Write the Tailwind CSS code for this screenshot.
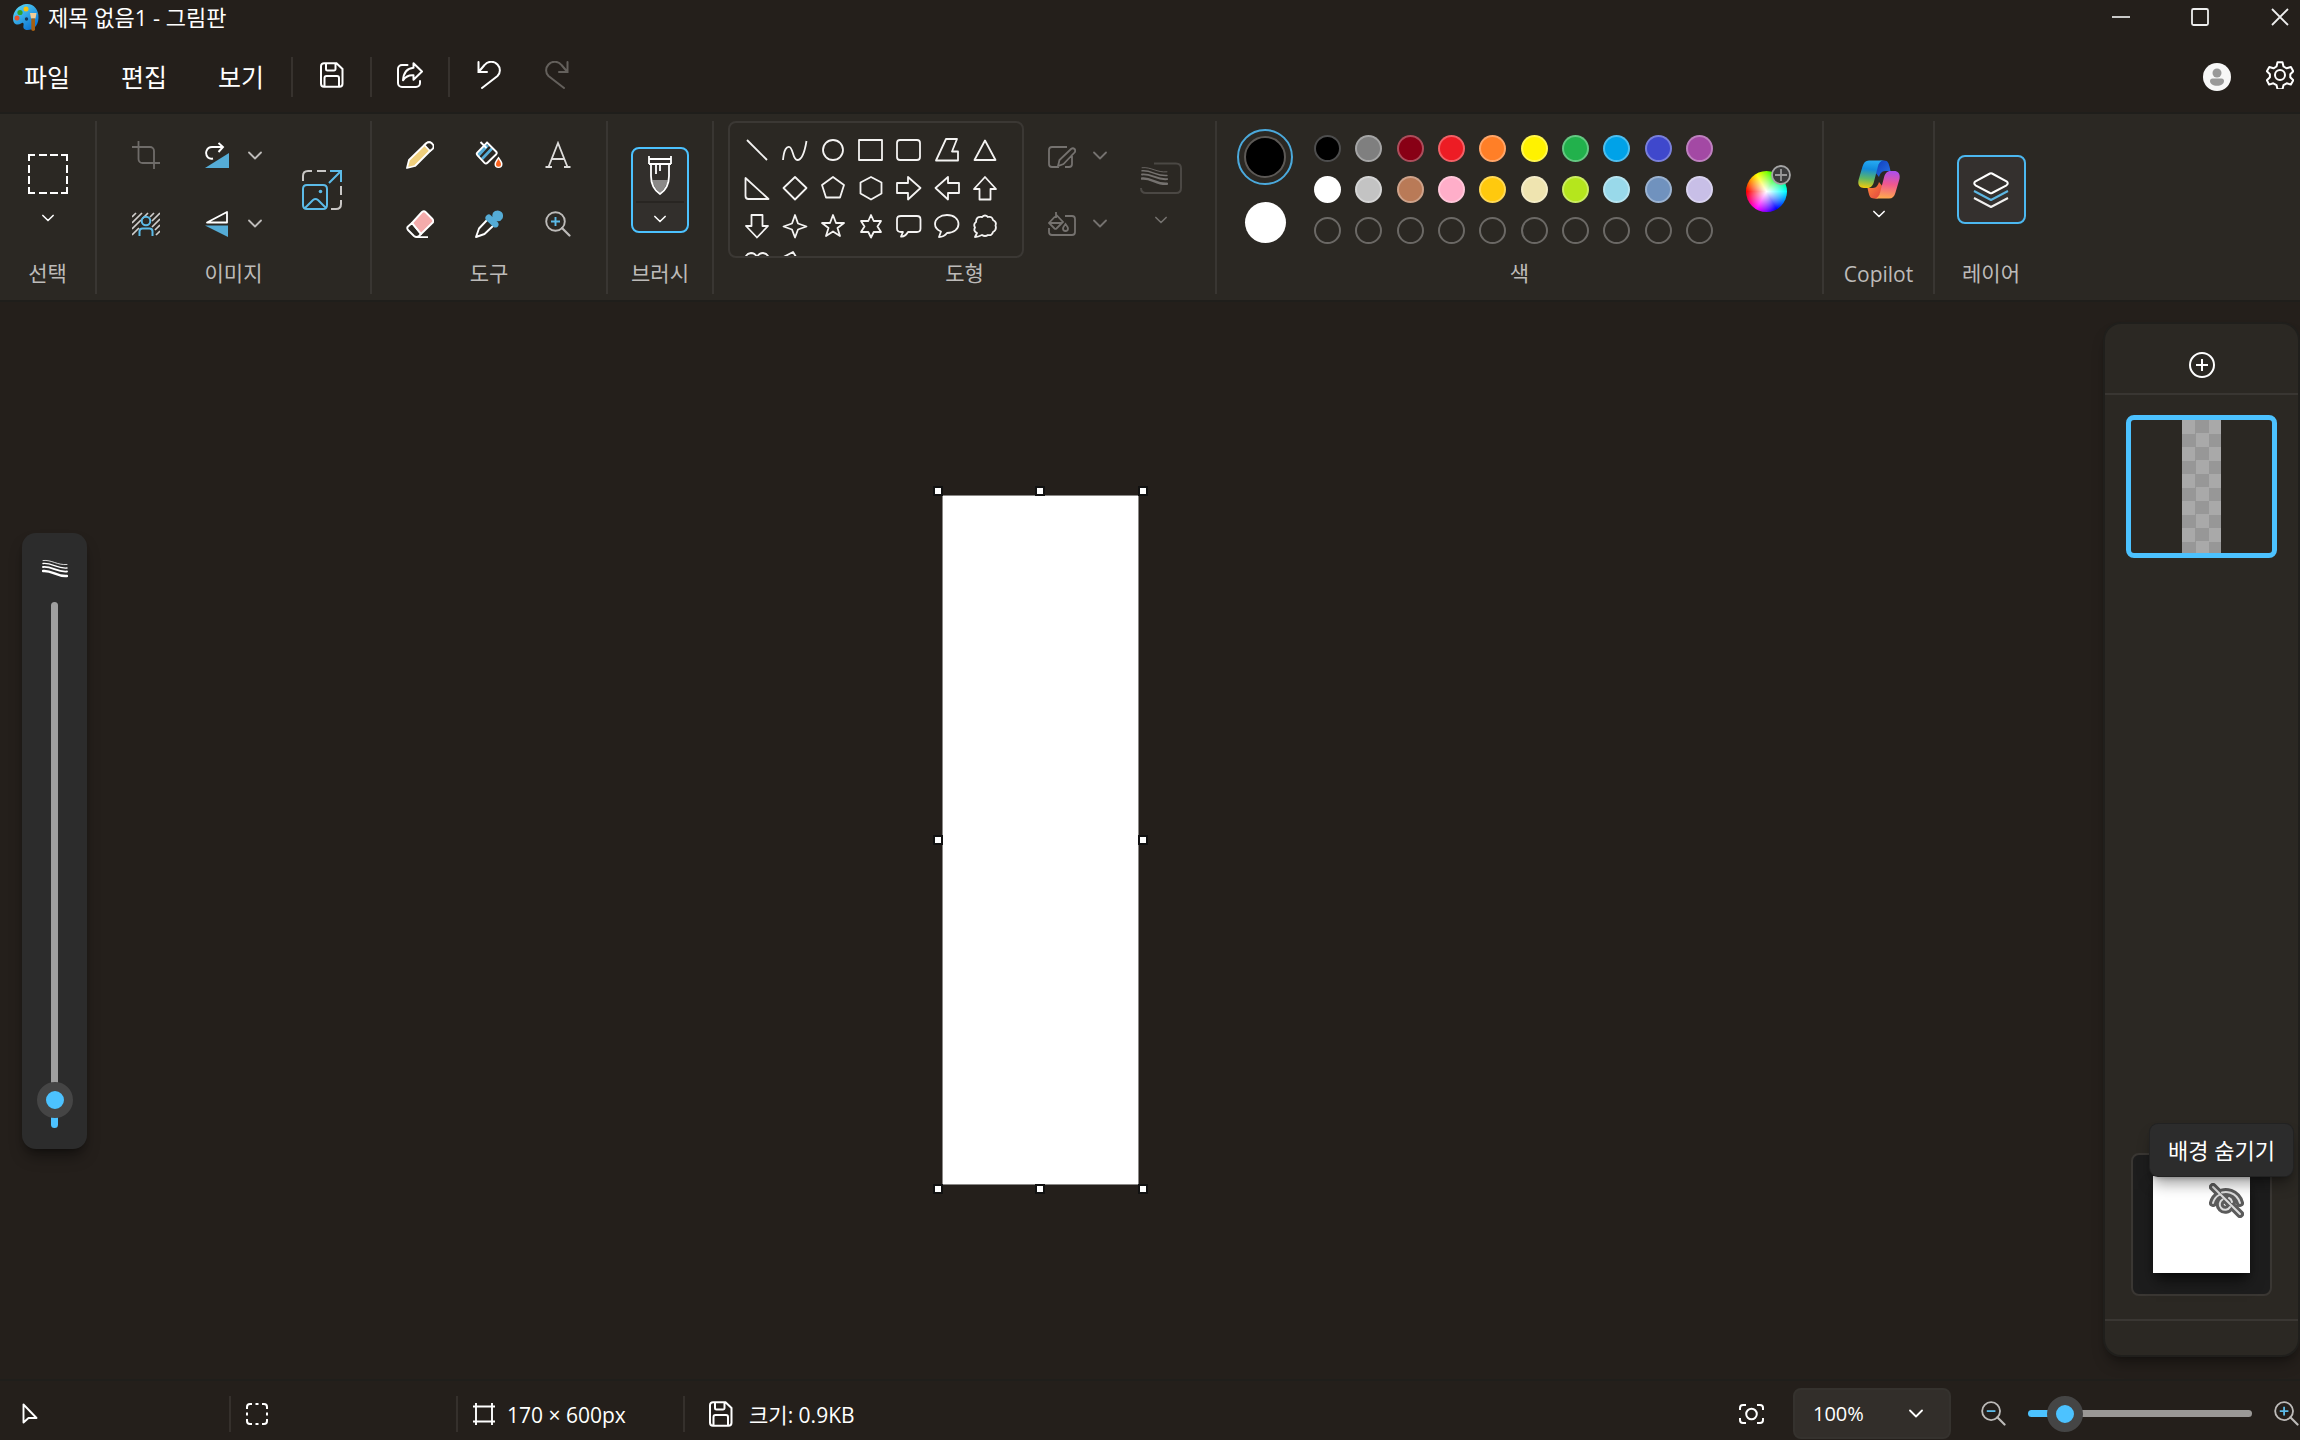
<!DOCTYPE html>
<html lang="ko">

<head>
  <meta charset="UTF-8" />
  <meta name="viewport" content="width=device-width, initial-scale=1.0" />
  <title>제목 없음1 - 그림판</title>
  <script src="https://cdn.jsdelivr.net/npm/@tailwindcss/browser@4"></script>
</head>

<body class="flex h-screen flex-col overflow-hidden bg-[#241f1b] font-['Open_Sans','Noto_Sans_CJK_KR',sans-serif] text-[21px] leading-7 text-white">

  <svg class="hidden">
    <symbol id="chevron" viewBox="0 0 14 9">
      <path d="M1 1.5l6 6 6-6" fill="none" stroke="currentColor" stroke-width="1.8" stroke-linecap="round" stroke-linejoin="round" />
    </symbol>
    <symbol id="save" viewBox="0 0 24 26">
      <path d="M4 1.2h12.5l6 5.8v14.8a3 3 0 0 1-3 3H4a3 3 0 0 1-3-3V4.2a3 3 0 0 1 3-3zM6 1.2V7a1.5 1.5 0 0 0 1.5 1.5H14A1.5 1.5 0 0 0 15.500 7V1.2M4.500 24.500V16a2 2 0 0 1 2-2H17a2 2 0 0 1 2 2v8.500" fill="none" stroke="currentColor" stroke-width="2" />
    </symbol>
    <symbol id="lens" viewBox="0 0 26 26">
      <path d="M17 17l7.500 7.500" stroke="currentColor" stroke-width="2.2" stroke-linecap="round" />
      <circle cx="10.500" cy="10.500" r="9.300" fill="none" stroke="currentColor" stroke-width="1.9" />
    </symbol>
    <symbol id="undo" viewBox="0 0 24 28">
      <path d="M1.500 1v10H10M2 10.500L7.500 4a8.600 8.600 0 0 1 13-.5c3.300 3.500 3 8.500 0 11.500L5 27" fill="none" stroke="currentColor" stroke-width="2" stroke-linecap="round" />
    </symbol>
    <symbol id="waves" viewBox="0 0 26 19">
      <g fill="none" stroke="currentColor" stroke-linecap="round">
        <path d="M1 1.500c9-1 14 5 24 4" stroke-width=".8" />
        <path d="M1 4.500c9-1 14 5.500 24 4.500" stroke-width="1.4" />
        <path d="M1 8c9-1 14 5.500 24 4.500" stroke-width="1.9" />
        <path d="M1 12c9-1 14 6 24 5" stroke-width="2.4" />
      </g>
    </symbol>
  </svg>

  <!-- title bar -->
  <header class="flex h-[34px] shrink-0 items-center pl-3">
    <svg class="h-7 w-7" viewBox="0 0 28 28">
      <defs>
        <linearGradient id="palette" x1="0" y1="0" x2="0.7" y2="1">
          <stop offset="0" stop-color="#5fe0fb" />
          <stop offset="1" stop-color="#0a72d2" />
        </linearGradient>
      </defs>
      <path d="M14 1C21 0 27 6 26.500 15c-.4 8-5 12-11 12-4 0-4.500-2.500-4-4.500.5-2.500-.5-3.500-2.500-2C6 22.500 1 22 1 15.500 1 8 6.500 2 14 1z" fill="url(#palette)" />
      <circle cx="14" cy="6" r="2.500" fill="#f9c10d" />
      <circle cx="8" cy="9.500" r="2.600" fill="#2fa32c" />
      <circle cx="5" cy="15" r="2.500" fill="#e7522b" />
      <circle cx="14.500" cy="16" r="1.700" fill="#12395c" />
      <path d="M18 10h6.500l-1 5.500H19z" fill="#f3cd97" />
      <path d="M19.300 15.500H23v11.500q-1.800 2-3.700 0z" fill="#a55f12" />
    </svg>
    <h1 class="ml-2 text-[22px]">제목 없음1 - 그림판</h1>
    <div class="ml-auto flex h-full items-center">
      <button class="flex h-full w-[79px] items-center justify-center" aria-label="최소화">
        <svg class="h-5 w-5" viewBox="0 0 20 20"><path d="M1 10h18" stroke="#ddd" stroke-width="1.8" /></svg>
      </button>
      <button class="flex h-full w-[79px] items-center justify-center" aria-label="최대화">
        <svg class="h-5 w-5" viewBox="0 0 20 20"><rect x="2" y="2" width="16" height="16" rx="1.5" fill="none" stroke="#eee" stroke-width="1.8" /></svg>
      </button>
      <button class="flex h-full w-[61px] items-center justify-center pl-5" aria-label="닫기">
        <svg class="h-5 w-5" viewBox="0 0 20 20"><path d="M2 2l16 16M18 2L2 18" stroke="#eee" stroke-width="1.8" /></svg>
      </button>
    </div>
  </header>

  <!-- menu bar -->
  <nav class="flex h-[78px] shrink-0 items-center pt-2 pr-[6px]">
    <button class="w-[97px] pr-[3px] text-[25px]">파일</button>
    <button class="w-[97px] pr-[3px] text-[25px]">편집</button>
    <button class="w-[97px] pr-[3px] text-[25px]">보기</button>
    <span class="h-10 w-[2px] bg-[#37322e]"></span>
    <button class="flex w-[77px] justify-center pb-1" aria-label="저장"><svg class="h-[26px] w-6"><use href="#save" /></svg></button>
    <span class="h-10 w-[2px] bg-[#37322e]"></span>
    <button class="flex w-[76px] justify-center pb-1" aria-label="공유">
      <svg class="h-[26px] w-[26px]" viewBox="0 0 26 26" fill="none" stroke="currentColor" stroke-width="2" stroke-linejoin="round" stroke-linecap="round">
        <path d="M10.500 3H5a4 4 0 0 0-4 4v14a4 4 0 0 0 4 4h14a4 4 0 0 0 4-4v-2" />
        <path d="M16.500 1.200l8.500 8.300-8.500 8.300v-4.500c-5-.5-8 1.500-10.500 5 .5-7 4-12 10.500-12.600z" />
      </svg>
    </button>
    <span class="h-10 w-[2px] bg-[#37322e]"></span>
    <button class="flex w-[78px] justify-center pb-1" aria-label="실행 취소"><svg class="h-7 w-6"><use href="#undo" /></svg></button>
    <button class="flex w-[58px] justify-center pb-1 text-[#64605c]" aria-label="다시 실행"><svg class="h-7 w-6 -scale-x-100"><use href="#undo" /></svg></button>
    <div class="ml-auto flex items-center gap-[35px]">
      <button aria-label="계정">
        <svg class="h-7 w-7" viewBox="0 0 28 28"><circle cx="14" cy="14" r="14" fill="#f7f7f7" /><circle cx="14" cy="10" r="4.500" fill="#999" /><path d="M7 18q0-2.500 2.500-2.500h9q2.500 0 2.500 2.500c0 3-3 4.800-7 4.800S7 21 7 18z" fill="#999" /></svg>
      </button>
      <button class="pb-1" aria-label="설정">
        <svg class="h-7 w-7" viewBox="0 0 28 28" fill="none" stroke="currentColor" stroke-width="2" stroke-linejoin="round">
          <circle cx="14" cy="14" r="5" />
          <path d="M11.500 1.200h5l1 4.300 3.200 1.800 4.200-1.300 2.400 4.300-3 3v3l3 3-2.400 4.300-4.200-1.300-3.200 1.800-1 4.200h-5l-1-4.200-3.200-1.800-4.200 1.300L.9 19.300l3-3v-3l-3-3L3.300 6l4.200 1.300 3-1.800z" />
        </svg>
      </button>
    </div>
  </nav>

  <!-- ribbon -->
  <div class="flex h-[190px] shrink-0 border-y-2 border-[#1f1e1b] bg-[#2b2823] pt-[7px] pb-[6px] text-[#bdbbb9]">
    <section class="flex w-[97px] shrink-0 flex-col border-r-2 border-[#393632]">
      <button class="flex h-[137px] w-full flex-col items-center gap-5 pt-[33px]" aria-label="선택 도구">
        <svg class="h-10 w-10" viewBox="0 0 40 40"><path d="M1 7V1h6M33 1h6v6M39 33v6h-6M7 39H1v-6M11 1h8M22 1h8M11 39h8M22 39h8M1 11v8M1 22v8M39 11v8M39 22v8" fill="none" stroke="#fff" stroke-width="2" /></svg>
        <svg class="h-2 w-3 text-white"><use href="#chevron" /></svg>
      </button>
      <h2 class="pt-[1px] text-center">선택</h2>
    </section>

    <section class="flex w-[275px] shrink-0 flex-col border-r-2 border-[#393632]">
      <div class="flex h-[137px] items-center pl-[7px]">
        <div class="grid h-full grid-cols-[84px_58px_18px] grid-rows-2 place-items-center">
          <button aria-label="자르기"><svg class="h-7 w-7 text-[#6f6c69]" viewBox="0 0 28 28" fill="none" stroke="currentColor" stroke-width="1.8"><path d="M6.500 0v18a4 4 0 0 0 4 4H28M0 6h18a4 4 0 0 1 4 4v18" /></svg></button>
          <button aria-label="회전"><svg class="h-[26px] w-6" viewBox="0 0 24 26"><path d="M24 11v15H0z" fill="#55acd6" /><path d="M3 15.500C-1 11 2 5 7 5h11M13.500 1L18 5l-4.500 5M3 15.500c1.500 1.300 3 1.500 5 1" fill="none" stroke="#fff" stroke-width="1.9" /></svg></button>
          <svg class="h-[9px] w-[14px]"><use href="#chevron" /></svg>
          <button aria-label="배경 제거">
            <svg class="h-6 w-7" viewBox="0 0 28 24" fill="none">
              <path d="M0 5l4-4M0 11L10 1M0 17l9-9M0 23l7-7M10 7l6-6M18 5l4-4M20 9l8-8M20 15l8-8M23 18l5-5M24 23l4-4" stroke="#d0cecc" stroke-width="1.7" />
              <circle cx="14" cy="9" r="4.300" stroke="#5cbbe8" stroke-width="2" />
              <path d="M7.500 24v-4.500q0-3 3-3h7q3 0 3 3V24" stroke="#5cbbe8" stroke-width="2" />
            </svg>
          </button>
          <button aria-label="대칭 이동"><svg class="h-[26px] w-6" viewBox="0 0 24 26"><path d="M22 1v10.500H2z" fill="none" stroke="#fff" stroke-width="1.8" stroke-linejoin="round" /><path d="M0 14.500h23V26z" fill="#55acd6" /></svg></button>
          <svg class="h-[9px] w-[14px]"><use href="#chevron" /></svg>
        </div>
        <button class="ml-[38px]" aria-label="크기 조정">
          <svg class="h-10 w-10" viewBox="0 0 40 40" fill="none" stroke-width="2">
            <path d="M1 11V6q0-5 5-5h4M15 1h9M39 16v9M39 30v4q0 5-5 5h-5" stroke="#c9c7c5" />
            <path d="M28 1h11v11M39 1L27 13M5 15h16q4 0 4 4v16q0 4-4 4H5q-4 0-4-4V19q0-4 4-4zM3 38l8-8q2.500-2 5 0l8 8" stroke="#5cbbe8" />
            <circle cx="18.500" cy="21.500" r="1.800" fill="#5cbbe8" />
          </svg>
        </button>
      </div>
      <h2 class="pt-[1px] text-center">이미지</h2>
    </section>

    <section class="flex w-[236px] shrink-0 flex-col border-r-2 border-[#393632]">
      <div class="grid h-[137px] grid-cols-[69px_69px_69px] grid-rows-2 place-content-center place-items-center">
        <button aria-label="연필">
          <svg class="h-7 w-7" viewBox="0 0 28 28" stroke="#fff" stroke-width="1.8" stroke-linejoin="round"><path d="M1 27l2-8L20 2.500Q23 0 26 2.500q2 3-.5 6L9 25z" fill="#efcf7c" /><path d="M18.500 4L21 1.800q3-1.500 5.300 1t.5 5L24 10z" fill="#2b2823" /></svg>
        </button>
        <button aria-label="채우기">
          <svg class="h-7 w-7" viewBox="0 0 28 28"><path d="M2 12l9-9 3 2L4 16zM6 17L16 6.500l2 2L8 19z" fill="#55acd6" /><path d="M5.500 1l6 6M12 1.500l9 9q1.500 1.500 0 3l-8.500 8.300q-1.500 1.500-3 0l-7-7.500q-1.500-1.500 0-3z" fill="none" stroke="#fff" stroke-width="1.9" /><path d="M23.500 15.500c3 4 4 6 4 7.500a4 4 0 0 1-8 0c0-1.500 1-3.500 4-7.500z" fill="#fff" /><path d="M23.500 18c1.700 2.700 2.500 3.800 2.500 5.200a2.500 2.500 0 0 1-5 0c0-1.400.8-2.500 2.500-5.200z" fill="#fb641f" /></svg>
        </button>
        <button aria-label="텍스트">
          <svg class="h-7 w-7" viewBox="0 0 28 28" fill="none" stroke="#dedddb" stroke-width="1.8"><path d="M4.500 26L14 2l9.500 24M7.500 18h13M1.500 26H8M20 26h6.500" /></svg>
        </button>
        <button aria-label="지우개">
          <svg class="h-7 w-7" viewBox="0 0 28 28" stroke="#fff" stroke-width="1.9" stroke-linejoin="round"><path d="M6 13L16 2q2-1.500 3.500 0l7 7q1.500 2 0 3.800L15 24z" fill="#f4abab" /><path d="M6 13l9 11-2 2q-2.500 2-5 0L2 20q-1.500-2 0-3.500zM10 27.200h12" fill="none" /></svg>
        </button>
        <button aria-label="색 선택">
          <svg class="h-7 w-7" viewBox="0 0 28 28"><path d="M13 9L4 18.500 1 27l8.500-3L19 15" fill="none" stroke="#fff" stroke-width="1.9" stroke-linejoin="round" /><path d="M11 6q2.500-3 5-.5L17.500 7q-1-4 2.500-6 4-1.500 6.500 1t1 6.500q-2 3.500-6 2.500l1.500 1.500q1.500 2.500-.5 4.500-2.500 1-4 0L11 10q-1.500-2 0-4z" fill="#55acd6" /></svg>
        </button>
        <button aria-label="돋보기">
          <svg class="h-[26px] w-[26px]" viewBox="0 0 26 26"><use href="#lens" /><path d="M10.500 6v9M6 10.500h9" stroke="#5cbbe8" stroke-width="1.9" /></svg>
        </button>
      </div>
      <h2 class="pt-[1px] text-center">도구</h2>
    </section>

    <section class="flex w-[106px] shrink-0 flex-col items-center border-r-2 border-[#393632]">
      <div class="h-[137px] pt-[26px]">
        <button class="flex h-[86px] w-[58px] flex-col items-center rounded-lg border-2 border-[#4cc2ff] bg-[#322f2c] pt-[7px]" aria-label="브러시 종류">
          <svg class="h-10 w-6" viewBox="0 0 24 40"><path d="M4 24h16q-2 8-8 13-6-5-8-13z" fill="#8b8988" /><path d="M1 0v8M23 0v8M1 3h22M1 8h22M3 8v12q0 12 9 18 9-6 9-18V8M8 9v9M12 9v6" fill="none" stroke="#fff" stroke-width="1.8" /></svg>
          <span class="mt-[5px] h-[2px] w-12 bg-[#282522]"></span>
          <svg class="mt-3 h-2 w-3 text-white"><use href="#chevron" /></svg>
        </button>
      </div>
      <h2 class="pt-[1px] text-center">브러시</h2>
    </section>

    <section class="flex w-[503px] shrink-0 flex-col border-r-2 border-[#393632]">
      <div class="flex h-[137px] pl-[14px]">
        <div id="shapes" class="grid w-[296px] auto-rows-[38px] grid-cols-[repeat(7,38px)] place-items-center overflow-hidden rounded-lg border-2 border-[#3b3834] pt-2 pl-2"></div>
        <div class="ml-[10px] grid grid-cols-[56px_20px] grid-rows-2 place-items-center text-[#75726f]">
          <button aria-label="윤곽선"><svg class="h-7 w-7" viewBox="0 0 28 28" fill="none" stroke="currentColor" stroke-width="1.8"><path d="M19 6H4Q1 6 1 9v14q0 3 3 3h7M24 15v8q0 3-3 3h-4M10 25l1.500-6L23 8q2-1.500 3.500 0t0 3.500L15.500 23z" /></svg></button>
          <svg class="h-[9px] w-[14px]"><use href="#chevron" /></svg>
          <button aria-label="도형 채우기"><svg class="h-6 w-7" viewBox="0 0 28 24" fill="none" stroke="currentColor" stroke-width="1.8"><path d="M17 4h7q3 0 3 3v13q0 3-3 3H4q-3 0-3-3v-4M8 0v6M8 2.500l7 7.500-6.500 6.500q-1 .7-2 0L1 11l6-6.500M1.500 11h13M17.500 12c1.700 2.200 2.500 3.500 2.500 4.500a2.500 2.500 0 0 1-5 0c0-1 .8-2.300 2.500-4.500z" /></svg></button>
          <svg class="h-[9px] w-[14px]"><use href="#chevron" /></svg>
        </div>
        <button class="ml-[30px] flex w-[42px] flex-col items-center gap-[22px] pt-[41px] text-[#75726f]" aria-label="크기">
          <svg class="h-8 w-[42px]" viewBox="0 0 42 32"><path d="M14 1.500h22q5 0 5 5V26q0 5-5 5H6q-5 0-5-5" fill="none" stroke="#4b4844" stroke-width="2" /><use href="#waves" x="1" y="4" width="27" height="20" /></svg>
          <svg class="h-2 w-3"><use href="#chevron" /></svg>
        </button>
      </div>
      <h2 class="pt-[1px] text-center">도형</h2>
    </section>

    <section class="flex w-[607px] shrink-0 flex-col border-r-2 border-[#393632]">
      <div class="flex h-[137px] items-start pt-2 pl-5">
        <div class="flex flex-col items-center gap-[17px]">
          <button class="flex h-14 w-14 items-center justify-center rounded-full border-2 border-[#4ba9dc]" aria-label="색 1"><span class="h-[42px] w-[42px] rounded-full border-2 border-[#5c5956] bg-black"></span></button>
          <button class="h-[41px] w-[41px] rounded-full bg-white" aria-label="색 2"></button>
        </div>
        <div id="swatches" class="mt-[6px] ml-[21px] grid w-[399px] grid-cols-[repeat(10,27px)] justify-between gap-y-[14px]"></div>
        <button class="relative mt-[42px] ml-[33px] h-[41px] w-[41px] rounded-full bg-[radial-gradient(circle,white,transparent_68%),conic-gradient(from_270deg,red,yellow,lime,cyan,blue,magenta,red)]" aria-label="색 편집">
          <svg class="absolute -top-[6px] left-[25px] h-5 w-5" viewBox="0 0 20 20"><circle cx="10" cy="10" r="9" fill="#3b3b3b" stroke="#a5a5a5" stroke-width="1.8" /><path d="M10 4v12M4 10h12" stroke="#999" stroke-width="1.8" /></svg>
        </button>
      </div>
      <h2 class="pt-[1px] text-center">색</h2>
    </section>

    <section class="flex w-[111px] shrink-0 flex-col border-r-2 border-[#393632]">
      <button class="flex h-[137px] w-full flex-col items-center gap-[11px] pt-[39px]" aria-label="Copilot 메뉴">
        <svg class="h-[39px] w-[42px]" viewBox="0 0 42 39">
          <defs>
            <linearGradient id="cp-left" x1="0.3" y1="0" x2="0.2" y2="1"><stop offset="0" stop-color="#25a8f2" /><stop offset=".3" stop-color="#128bdc" /><stop offset=".65" stop-color="#5eb765" /><stop offset="1" stop-color="#f7cb0a" /></linearGradient>
            <linearGradient id="cp-right" x1="0.3" y1="0" x2="0.2" y2="1"><stop offset="0" stop-color="#ffa650" /><stop offset=".5" stop-color="#f0588e" /><stop offset="1" stop-color="#a94ef0" /></linearGradient>
            <linearGradient id="cp-blue" x1="0" y1="0" x2="1" y2="1"><stop offset="0" stop-color="#0f3dbd" /><stop offset="1" stop-color="#2872e4" /></linearGradient>
            <linearGradient id="cp-red" x1="0" y1="0" x2="1" y2="1"><stop offset="0" stop-color="#e0413f" /><stop offset="1" stop-color="#ff8a3c" /></linearGradient>
          </defs>
          <path d="M22 .5h4c4 0 4.700 3 5.500 6l1 4.500h-4c-4 0-6 1-7.500 6l-4-5z" fill="url(#cp-blue)" />
          <path d="M11 .5h15c-4 0-5.200 3-6.200 6.500L16 21.500c-1 4-3 6.500-6.500 6.500H6C.5 28-.5 23.500.8 19L4.500 6.500C5.700 2.500 7.500.5 11 .5z" fill="url(#cp-left)" />
          <g transform="rotate(180 21 19.500)">
            <path d="M22 .5h4c4 0 4.700 3 5.500 6l1 4.500h-4c-4 0-6 1-7.500 6l-4-5z" fill="url(#cp-red)" />
            <path d="M11 .5h15c-4 0-5.200 3-6.200 6.500L16 21.500c-1 4-3 6.500-6.500 6.500H6C.5 28-.5 23.500.8 19L4.500 6.500C5.700 2.500 7.500.5 11 .5z" fill="url(#cp-right)" />
          </g>
        </svg>
        <svg class="h-2 w-3 text-white"><use href="#chevron" /></svg>
      </button>
      <h2 class="pt-[2px] text-center">Copilot</h2>
    </section>

    <section class="flex w-[112px] shrink-0 flex-col items-center">
      <div class="flex h-[137px] items-center">
        <button class="flex h-[69px] w-[69px] items-center justify-center rounded-lg border-2 border-[#4cb8f0] bg-[#34302e]" aria-label="레이어 패널">
          <svg class="h-9 w-9" viewBox="0 0 36 36" fill="none" stroke-width="2" stroke-linejoin="round"><path d="M17 1.500q1-.5 2 0L33.500 9.300q2.500 2 0 4L19 21q-1 .5-2 0L2.500 13.300q-2.500-2 0-4z" stroke="#fff" /><path d="M1 19l17 9 17-9" stroke="#5cb6e2" /><path d="M1 26l17 9 17-9" stroke="#f0efee" /></svg>
        </button>
      </div>
      <h2 class="pt-[1px] text-center">레이어</h2>
    </section>
  </div>

  <!-- work area -->
  <main class="flex min-h-0 flex-1 items-center">
    <aside class="ml-[22px] flex h-[616px] w-[65px] flex-col items-center rounded-[14px] bg-[#2c2c2c] pt-[26px] shadow-lg shadow-black/40">
      <svg class="h-[19px] w-[26px]"><use href="#waves" /></svg>
      <input type="range" min="0" max="100" value="2" aria-label="브러시 크기"
        class="mt-6 h-[526px] w-[7px] appearance-none rounded-full bg-[linear-gradient(to_top,#4cc2ff_27px,#9f9f9f_27px)] [direction:rtl] [writing-mode:vertical-lr] [&::-webkit-slider-thumb]:h-9 [&::-webkit-slider-thumb]:w-9 [&::-webkit-slider-thumb]:appearance-none [&::-webkit-slider-thumb]:rounded-full [&::-webkit-slider-thumb]:border-[9px] [&::-webkit-slider-thumb]:border-[#454545] [&::-webkit-slider-thumb]:bg-[#4cc2ff]" />
    </aside>

    <div class="flex flex-1 justify-center pr-[111px] pb-[2px]">
      <div class="relative h-[690px] w-[197px] border border-[#8a8886] bg-white">
        <span class="absolute -top-[10px] -left-[10px] h-[10px] w-[10px] border-2 border-[#111] bg-white"></span>
        <span class="absolute -top-[10px] left-[92px] h-[10px] w-[10px] border-2 border-[#111] bg-white"></span>
        <span class="absolute -top-[10px] -right-[10px] h-[10px] w-[10px] border-2 border-[#111] bg-white"></span>
        <span class="absolute top-[339px] -left-[10px] h-[10px] w-[10px] border-2 border-[#111] bg-white"></span>
        <span class="absolute top-[339px] -right-[10px] h-[10px] w-[10px] border-2 border-[#111] bg-white"></span>
        <span class="absolute -bottom-[10px] -left-[10px] h-[10px] w-[10px] border-2 border-[#111] bg-white"></span>
        <span class="absolute -bottom-[10px] left-[92px] h-[10px] w-[10px] border-2 border-[#111] bg-white"></span>
        <span class="absolute -right-[10px] -bottom-[10px] h-[10px] w-[10px] border-2 border-[#111] bg-white"></span>
      </div>
    </div>

    <aside class="mr-[2px] flex w-[193px] flex-col items-center self-stretch pt-[22px] pb-6">
      <div class="flex w-full flex-1 flex-col items-center rounded-2xl bg-[#2b2823] shadow-lg ring-2 shadow-black/40 ring-[#201f1c]">
        <div class="flex h-[71px] w-full items-center justify-center border-b-2 border-[#393632] pt-3">
          <button aria-label="레이어 추가"><svg class="h-[26px] w-[26px]" viewBox="0 0 26 26" fill="none" stroke="#fff" stroke-width="2"><circle cx="13" cy="13" r="12" /><path d="M13 7v12M7 13h12" /></svg></button>
        </div>
        <button class="mt-5 flex h-[143px] w-[151px] justify-center rounded-lg border-[5px] border-[#4cc2ff]" aria-label="레이어 1">
          <span class="h-full w-[39px] bg-[conic-gradient(#979797_25%,#a9a9a9_0_50%,#979797_0_75%,#a9a9a9_0)] bg-size-[27px_27px]"></span>
        </button>
        <div class="relative mt-auto flex h-[143px] w-[141px] items-center justify-center rounded-lg border-2 border-[#3a3733] bg-[#1d1d1d]">
          <span class="h-[97px] w-[97px] bg-white shadow-lg shadow-black/60"></span>
          <button class="absolute top-[28px] right-[26px]" aria-label="배경 숨기기">
            <svg class="h-[35px] w-[35px]" viewBox="0 0 35 35" fill="none" stroke-linecap="round">
              <path d="M4 4l27 27M4 20q1.500-5.500 6-8M13 9.500q4-1.200 8.500.2Q29 12.500 31 20M13.500 16.500a5.500 5.500 0 1 0 7.500 7.500M20 15q2.500 1 3 4" stroke="#5b5b5b" stroke-width="8" />
              <path d="M4 4l27 27M4 20q1.500-5.500 6-8M13 9.500q4-1.200 8.500.2Q29 12.500 31 20M13.500 16.500a5.500 5.500 0 1 0 7.500 7.500M20 15q2.500 1 3 4" stroke="#dcdcdc" stroke-width="2" />
            </svg>
          </button>
          <div role="tooltip" class="absolute -top-[31px] left-[17px] flex h-[52px] w-[143px] items-center justify-center rounded-lg bg-[#2c2c2c] text-[22px] whitespace-nowrap shadow-lg ring-1 shadow-black/40 ring-[#222]">배경 숨기기</div>
        </div>
        <div class="mt-[23px] h-[36px] w-full border-t-2 border-[#3a3733]"></div>
      </div>
    </aside>
  </main>

  <!-- status bar -->
  <footer class="flex h-[61px] shrink-0 items-center border-t-2 border-[#1f1e1b] pt-[6px]">
    <div class="flex h-9 w-[231px] items-center border-r-2 border-[#35302c] pl-[22px]">
      <svg class="h-[22px] w-4" viewBox="0 0 16 22"><path d="M1.500 1.500v18l5-4.500h8z" fill="none" stroke="#fff" stroke-width="1.9" stroke-linejoin="round" /></svg>
    </div>
    <div class="flex h-9 w-[227px] items-center border-r-2 border-[#35302c] pl-[15px]">
      <svg class="h-[22px] w-[22px]" viewBox="0 0 22 22" fill="none" stroke="#fff" stroke-width="2"><path d="M1 6V4q0-3 3-3h2M16 1h2q3 0 3 3v2M21 16v2q0 3-3 3h-2M6 21H4q-3 0-3-3v-2M9.500 1h3M9.500 21h3M1 9.500v3M21 9.500v3" /></svg>
    </div>
    <div class="flex h-9 w-[227px] items-center gap-3 border-r-2 border-[#35302c] pl-[15px]">
      <svg class="h-[22px] w-[22px]" viewBox="0 0 22 22" fill="none" stroke="#fff" stroke-width="1.9"><path d="M0 3.500h22M0 18.500h22M3 0v22M19 0v22" /></svg>
      <span class="pt-[2px]">170 × 600px</span>
    </div>
    <div class="flex h-9 items-center gap-4 pl-6">
      <svg class="h-[26px] w-6"><use href="#save" /></svg>
      <span class="pt-[2px]">크기: 0.9KB</span>
    </div>
    <div class="ml-auto flex items-center">
      <button aria-label="화면에 맞추기"><svg class="h-5 w-[25px]" viewBox="0 0 25 20" fill="none" stroke="#fff" stroke-width="2"><path d="M1 6V4q0-3 3-3h3M18 1h3q3 0 3 3v2M24 14v2q0 3-3 3h-3M7 19H4q-3 0-3-3v-2" /><circle cx="12.500" cy="10" r="5.300" /></svg></button>
      <div class="relative ml-[29px]">
        <select aria-label="확대/축소" class="h-[51px] w-[158px] appearance-none rounded-lg border-2 border-[#35322e] bg-[#322e2a] pl-[18px] text-[20px]">
          <option>100%</option>
          <option>200%</option>
        </select>
        <svg class="pointer-events-none absolute top-[21px] right-7 h-[9px] w-[14px]"><use href="#chevron" /></svg>
      </div>
      <button class="ml-[30px] text-[#bdbbb9]" aria-label="축소"><svg class="h-[25px] w-[25px]" viewBox="0 0 26 26"><use href="#lens" /><path d="M6 10.500h9" stroke="#5cbbe8" stroke-width="1.9" /></svg></button>
      <input type="range" min="0" max="100" value="10" aria-label="확대/축소 슬라이더"
        class="ml-[22px] h-[7px] w-[224px] appearance-none rounded-full bg-[linear-gradient(to_right,#4cc2ff_36px,#9a9896_36px)] [&::-webkit-slider-thumb]:h-9 [&::-webkit-slider-thumb]:w-9 [&::-webkit-slider-thumb]:appearance-none [&::-webkit-slider-thumb]:rounded-full [&::-webkit-slider-thumb]:border-[9px] [&::-webkit-slider-thumb]:border-[#454545] [&::-webkit-slider-thumb]:bg-[#4cc2ff]" />
      <button class="mr-[1px] ml-[22px] text-[#bdbbb9]" aria-label="확대"><svg class="h-[25px] w-[25px]" viewBox="0 0 26 26"><use href="#lens" /><path d="M10.500 6v9M6 10.500h9" stroke="#5cbbe8" stroke-width="1.9" /></svg></button>
    </div>
  </footer>

  <script>
    const shapes = [
      ['선', 'M3 3l20 20'],
      ['곡선', 'M1 23C2 12 5 9 7.5 10c4 1.5 3 13 8 13C20 23 23 13 24.5 4'],
      ['타원', 'M13 3a10 10 0 1 1 0 20a10 10 0 1 1 0-20z'],
      ['사각형', 'M1 3h23v20H1z'],
      ['둥근 사각형', 'M4 3h17q3 0 3 3v14q0 3-3 3H4q-3 0-3-3V6q0-3 3-3z'],
      ['다각형', 'M12 2h11l-5 12.5h6V23.5H2z'],
      ['삼각형', 'M13 3.5L23.5 23h-21z'],
      ['직각 삼각형', 'M1.5 3v18q0 3 3 3h20z'],
      ['다이아몬드', 'M13 2l11.5 11L13 24.5 1.5 13z'],
      ['오각형', 'M13 2l11 8-4 12.5H6L2 10z'],
      ['육각형', 'M13 2l10.5 5.5v11L13 24.5 2.5 18.5v-11z'],
      ['오른쪽 화살표', 'M1 8h11V2l12.5 11L12 24.5V18H1z'],
      ['왼쪽 화살표', 'M25 8H14V2L1.5 13 14 24.5V18h11z'],
      ['위쪽 화살표', 'M13 2L2 14h5.5v10.5h11V14H24z'],
      ['아래쪽 화살표', 'M13 24.5L2 13h5.5V2h11v11H24z'],
      ['별 4', 'M13 2l3 8.5L24.5 13.5 16 16.5 13 24.5l-3-8L1.5 13.5 10 10.5z'],
      ['별 5', 'M13 2l3 8h8l-6.5 5L20 23l-7-4.5L6 23l2.5-8L2 10h8z'],
      ['별 6', 'M13 2l2.7 6H23l-3.5 5.5L23 19h-7.3L13 24.5 10.3 19H3l3.5-5.5L3 8h7.3z'],
      ['둥근 사각형 설명선', 'M5 3h16q3.5 0 3.5 3.5v9q0 3.5-3.5 3.5H12q-3 5-7 4.5l2-4.5H5q-4 0-4-3.5v-9Q1 3 5 3z'],
      ['타원 설명선', 'M13 2C20 2 24.5 6 24.5 11S20 20 13 20q-3 4-8 4l2-5.5Q1 16 1 11C1 6 6 2 13 2z'],
      ['구름 설명선', 'M10 4q3-3 6 0 4-1 5 3 4 2 2.5 5.5Q25 17 21 19q-1 4-5 3-3 2-6 0-4 2-7 2l2-4Q1 18 3 14.5 1 11 4 9 4 3 10 4z'],
      ['하트', 'M13 24L2 11q-2-8 5-9 4 0 6 4 2-4 6-4 7 1 5 9z'],
      ['번개', 'M1.5 6L11 1l5 8-2 1 6 6-2 1 7 7-12-7 2-1-8-5 2-1z'],
    ];
    document.getElementById('shapes').innerHTML = shapes.map(([name, d]) => `
      <button aria-label="${name}"><svg class="h-[26px] w-[26px]" viewBox="0 0 26 26" fill="none" stroke="#f4f3f2" stroke-width="1.8" stroke-linejoin="round"><path d="${d}" /></svg></button>`).join('');

    const colors = [
      '#000000', '#7f7f7f', '#880015', '#ed1c24', '#ff7f27', '#fff200', '#22b14c', '#00a2e8', '#3f48cc', '#a349a4',
      '#ffffff', '#c3c3c3', '#b97a57', '#ffaec9', '#ffc90e', '#efe4b0', '#b5e61d', '#99d9ea', '#7092be', '#c8bfe7',
    ];
    let html = '';
    for (let i = 0; i < 30; i++) {
      html += `<button class="h-[27px] w-[27px] rounded-full border-2 border-white/30" style="background-color: ${colors[i] || 'transparent'}" aria-label="${colors[i] || '빈 색'}"></button>`;
    }
    document.getElementById('swatches').innerHTML = html;
  </script>
</body>

</html>
